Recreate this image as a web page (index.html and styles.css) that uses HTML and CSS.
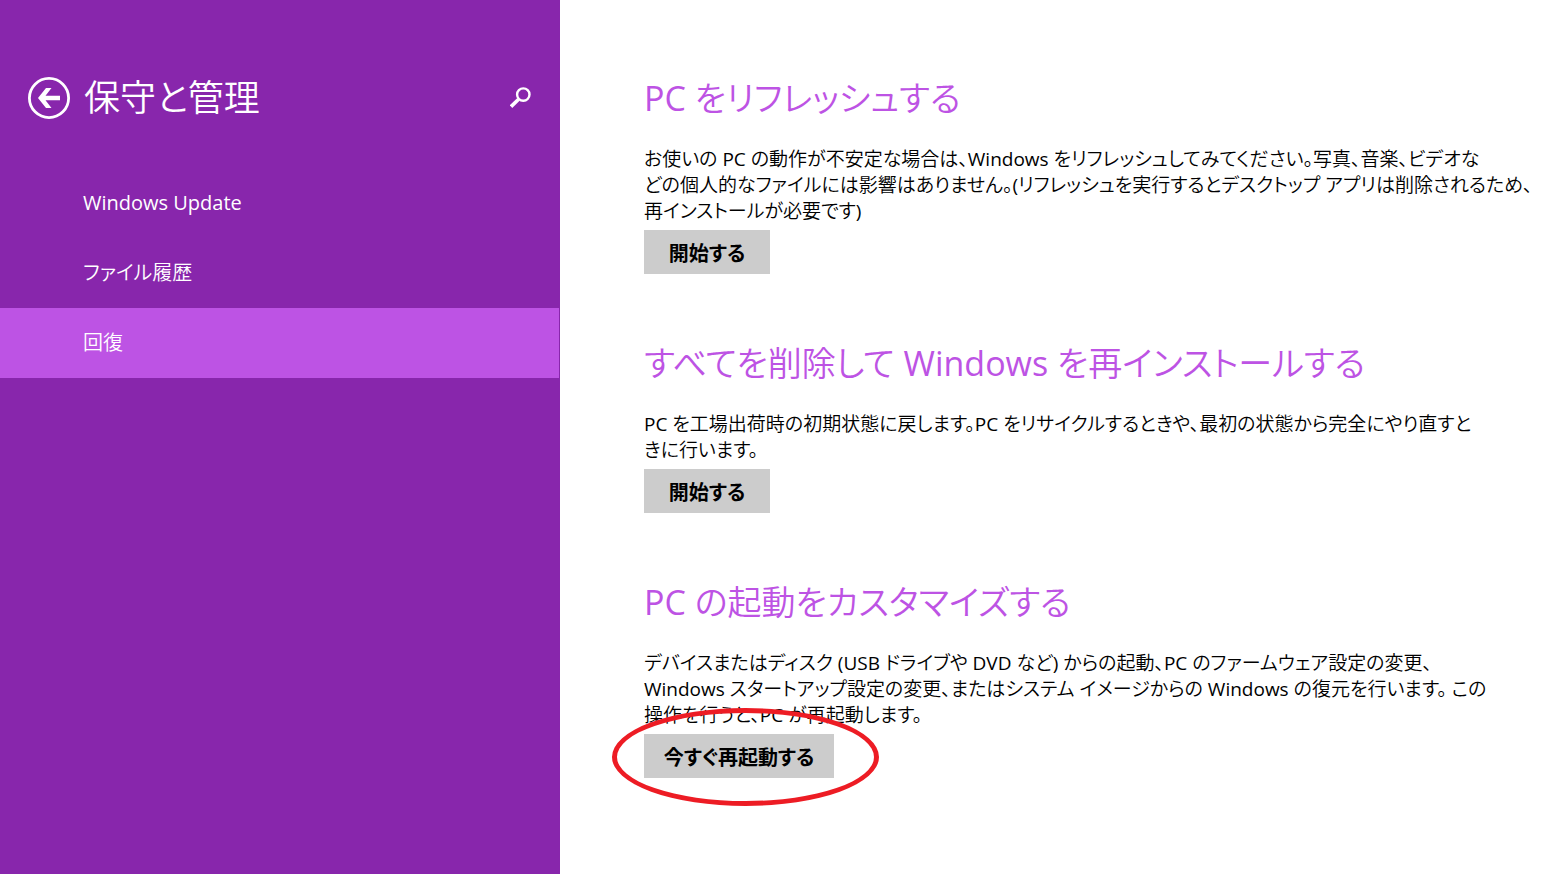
FILE: index.html
```html
<!DOCTYPE html>
<html lang="ja">
  <head>
    <meta charset="utf-8" />
    <title>保守と管理</title>
    <link rel="stylesheet" href="styles.css" />
  </head>
  <body>
    <aside class="sidebar">
      <header class="sidebar-header">
        <button type="button" class="icon-button" aria-label="戻る">
          <svg width="42" height="42" viewBox="0 0 42 42">
            <circle cx="21" cy="21" r="19.6" fill="none" stroke="#fff" stroke-width="2.8" />
            <path d="M10 21 L18 11 H23.5 L17.5 18.8 H32 V23.2 H17.5 L23.5 31 H18 Z" fill="#fff" />
          </svg>
        </button>
        <h1 class="sidebar-title">保守と管理</h1>
        <button type="button" class="icon-button" aria-label="検索">
          <svg width="22" height="22" viewBox="0 0 22 22" fill="none" stroke="#fff">
            <circle cx="13.3" cy="7.6" r="6.2" stroke-width="2.4" />
            <path d="M8.6 12.2 L1 19.6" stroke-width="3.6" />
          </svg>
        </button>
      </header>
      <nav class="menu">
        <a href="#update" class="menu-item">Windows Update</a>
        <a href="#history" class="menu-item">ファイル履歴</a>
        <a href="#recovery" class="menu-item active" aria-current="page">回復</a>
      </nav>
    </aside>

    <main class="content">
      <section class="option">
        <h2 class="option-title">PC をリフレッシュする</h2>
        <p class="option-text">
          お使いの PC の動作が不安定な場合は、Windows をリフレッシュしてみてください。写真、音楽、ビデオな<br />どの個人的なファイルには影響はありません。(リフレッシュを実行するとデスクトップ アプリは削除されるため、<br />再インストールが必要です)
        </p>
        <button type="button" class="option-button">開始する</button>
      </section>

      <section class="option">
        <h2 class="option-title">すべてを削除して Windows を再インストールする</h2>
        <p class="option-text">
          PC を工場出荷時の初期状態に戻します。PC をリサイクルするときや、最初の状態から完全にやり直すと<br />きに行います。
        </p>
        <button type="button" class="option-button">開始する</button>
      </section>

      <section class="option">
        <h2 class="option-title">PC の起動をカスタマイズする</h2>
        <p class="option-text">
          デバイスまたはディスク (USB ドライブや DVD など) からの起動、PC のファームウェア設定の変更、<br />Windows スタートアップ設定の変更、またはシステム イメージからの Windows の復元を行います。 この<br />操作を行うと、PC が再起動します。
        </p>
        <div class="marked">
          <button type="button" class="option-button wide">今すぐ再起動する</button>
          <span class="marker"></span>
        </div>
      </section>
    </main>
  </body>
</html>
```
FILE: styles.css
```css
* {
  box-sizing: border-box;
}

body {
  display: flex;
  min-height: 100vh;
  margin: 0;
  background: #fff;
  color: #000;
  font-family: "Open Sans", "Noto Sans CJK JP DemiLight", "Noto Sans CJK JP", sans-serif;
  font-size: 20px;
  /* narrow kana */
  font-feature-settings: "palt";
}

button {
  border: 0;
  font: inherit;
  font-feature-settings: inherit;
  cursor: pointer;
}

.sidebar {
  flex: 0 0 560px;
  padding-top: 74px;
  background: #8826ac;
  color: #fff;
}

.sidebar-header {
  display: flex;
  align-items: center;
  height: 48px;
  padding: 0 28px;
}

.icon-button {
  display: flex;
  padding: 0;
  background: none;
}

.sidebar-title {
  flex: 1;
  margin: 0 0 0 14px;
  font-size: 36px;
  font-weight: 400;
  line-height: 48px;
}

.menu {
  margin-top: 46px;
}

.menu-item {
  display: block;
  margin-right: 1px;
  padding-left: 83px;
  color: #fff;
  line-height: 70px;
  text-decoration: none;
}

.menu-item.active {
  background: #bd53e4;
}

.content {
  flex: 1;
  padding: 74px 40px 64px 84px;
}

.option {
  margin-bottom: 65px;
}

.option-title {
  margin: 0 0 24px;
  color: #bd53e4;
  font-size: 34px;
  font-weight: 400;
  line-height: 48px;
}

.option-text {
  margin: 0 0 6px;
  font-size: 19px;
  line-height: 26px;
  white-space: nowrap;
}

.option-button {
  display: block;
  min-width: 126px;
  height: 44px;
  padding: 0 16px;
  background: #ccc;
  color: #000;
  font-family: "Open Sans", "Noto Sans CJK JP", sans-serif;
  font-weight: 700;
}

.option-button.wide {
  min-width: 190px;
}

.marked {
  position: relative;
  width: fit-content;
}

/* red ring around the button */
.marker {
  position: absolute;
  top: -26px;
  right: -45px;
  bottom: -28px;
  left: -32px;
  border: 5px solid #ed1c24;
  border-radius: 50%;
  pointer-events: none;
}
```
